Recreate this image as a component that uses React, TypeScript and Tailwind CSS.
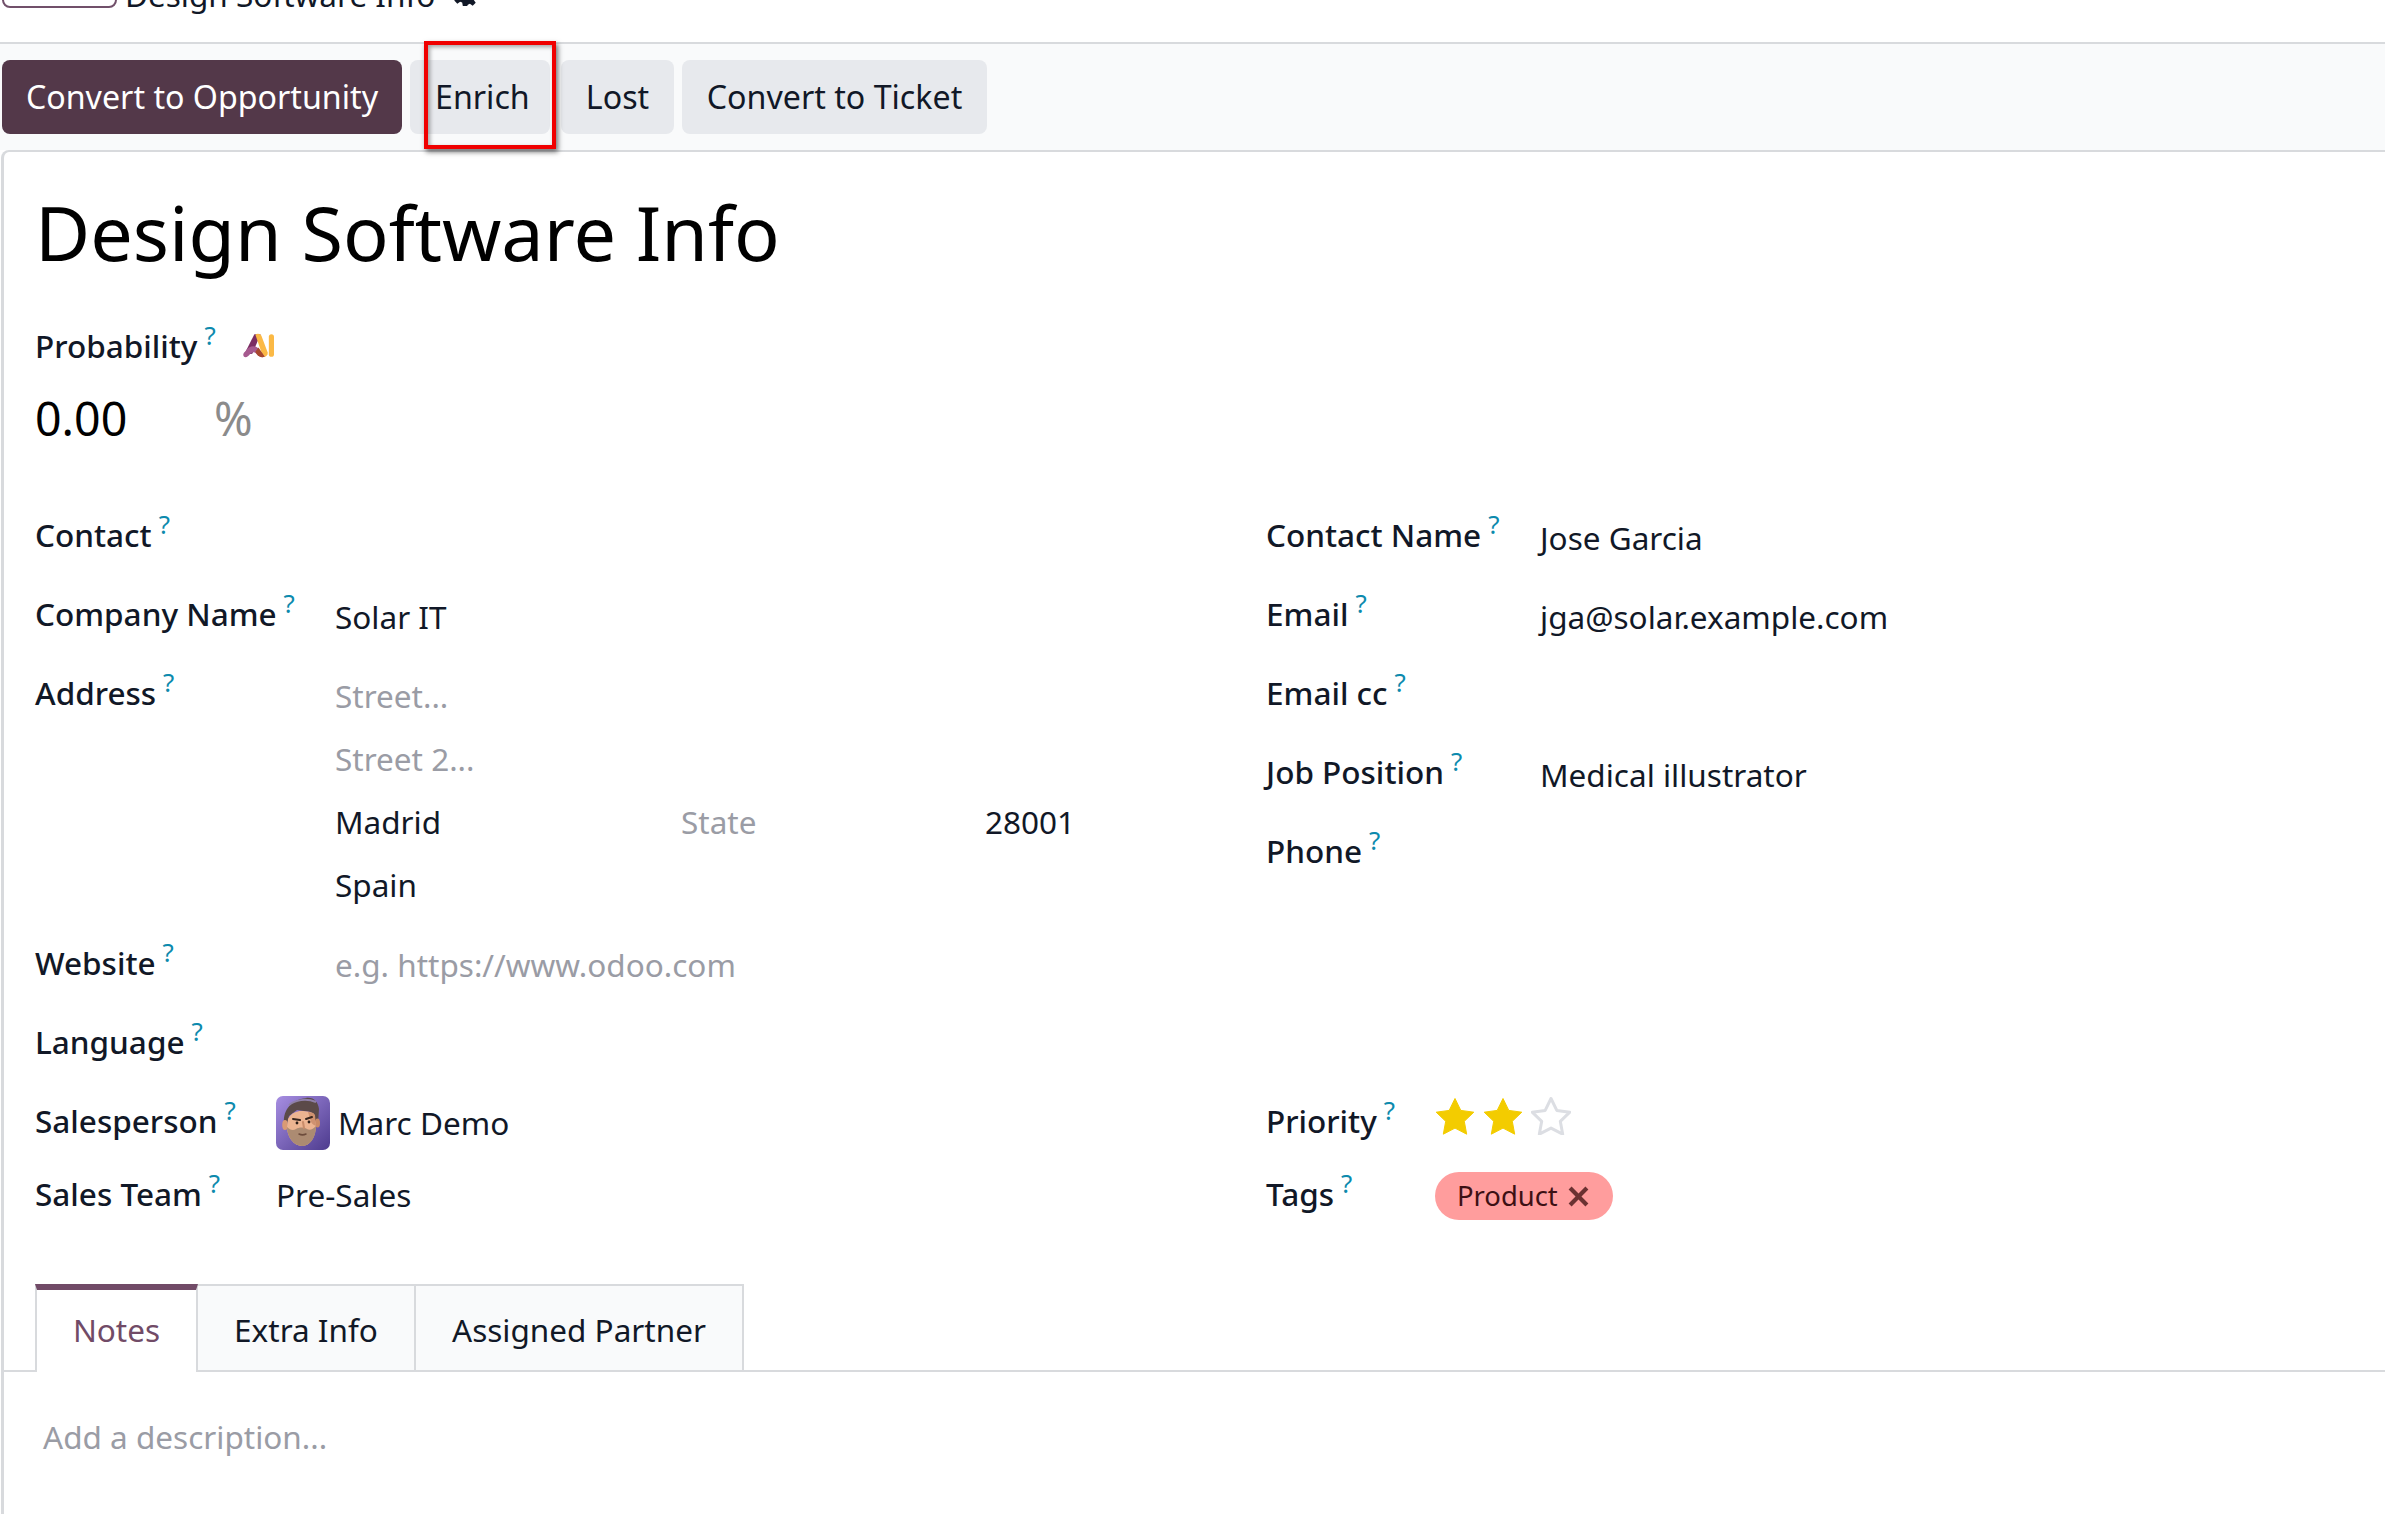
import type { ReactNode } from "react";

const Help = () => (
  <sup className="ml-[7px] text-[26px] font-normal leading-none text-[#0c8aad] -top-[13px]">?</sup>
);

function Label({ children }: { children: ReactNode }) {
  return (
    <span className="text-[31.5px] font-medium leading-none text-[#111827] whitespace-nowrap">
      {children}
      <Help />
    </span>
  );
}

function Row({
  label,
  value,
  labelWidth,
  height = "h-[79px]",
  muted,
}: {
  label: string;
  value?: ReactNode;
  labelWidth: string;
  height?: string;
  muted?: boolean;
}) {
  return (
    <div className={`flex items-start ${height}`}>
      <div className={`${labelWidth} shrink-0 pt-[5px]`}>
        <Label>{label}</Label>
      </div>
      {value && (
        <div className={`text-[31.5px] leading-none ${muted ? "pt-[7px] text-[#9a9ca5]" : "pt-[8px] text-[#111827]"}`}>
          {value}
        </div>
      )}
    </div>
  );
}

function Star({ filled }: { filled: boolean }) {
  return (
    <svg viewBox="0 0 40 38" className="h-[38px] w-[40px]">
      <path
        d="M20 1.500l5.800 11.900 13 1.800-9.500 9.100 2.400 12.900L20 31.100 8.300 37.200l2.400-12.900-9.500-9.100 13-1.800z"
        fill={filled ? "#f3cc00" : "#fff"}
        stroke={filled ? "#f3cc00" : "#dcdee3"}
        strokeWidth={filled ? 1 : 3}
        strokeLinejoin="round"
      />
    </svg>
  );
}

function AiLogo() {
  return (
    <svg viewBox="0 0 30 24" className="ml-[27px] h-[25px] w-[31px]">
      <path d="M11 1h6L9 20 1 21z" fill="#7b2d63" />
      <path d="M12 1.500c2-1.500 5-1 6 1.500l6 16c0 3-3 5-5 3z" fill="#fbb945" />
      <path d="M1 23c-1.500-2-.5-4 1-5 4-6 10-7 14-2l5 7c-3 1-6 0-8-3-2-2-4-2-6 0-2 3-4 4-6 3z" fill="#a65a8f" />
      <path d="M15 14l6 9c-3 1-6 0-8-3l-1-2z" fill="#a8482d" />
      <rect x="25" y="1" width="5" height="22" rx="2.500" fill="#fbb945" />
    </svg>
  );
}

function Avatar() {
  return (
    <svg viewBox="0 0 54 54" className="mt-[2px] h-[54px] w-[54px] shrink-0 rounded-[7px]">
      <defs>
        <linearGradient id="avatarBg" x1="0" y1="0" x2="1" y2="1">
          <stop offset="0" stopColor="#a78ee2" />
          <stop offset="1" stopColor="#4d3b8e" />
        </linearGradient>
      </defs>
      <rect width="54" height="54" fill="url(#avatarBg)" />
      <path d="M8 27C7 13 16 4 30 2c8-1 12 4 13 11l-1 15-4 3-3-15-14-2-8 6-2 9z" fill="#5b4a49" />
      <path d="M13 9c6-5 17-7 27-3" fill="none" stroke="#8f80a8" strokeWidth="2" />
      <ellipse cx="9" cy="29" rx="2.800" ry="5" fill="#d99a74" />
      <ellipse cx="41.500" cy="27" rx="2.500" ry="4.500" fill="#c98a66" />
      <path d="M12 23c3-6 9-8 13-8 6 0 11 1 13 3l2 11c0 12-6 21-14 21-8 0-15-9-15-19z" fill="#ecb491" />
      <path d="M32 16c3 0 6 1 7 3l1 11c-2-1-4-2-5-4z" fill="#cf9270" />
      <path d="M11 31c3 3 6 4 9 2 3-2 8-2 11 0 3 2 6 0 9-3 0 12-6 20-14 20-8 0-15-9-15-19z" fill="#ac8b72" />
      <path d="M17 23l7 1M30 23l6-2" stroke="#38261f" strokeWidth="2" strokeLinecap="round" />
      <circle cx="21" cy="27" r="1.400" fill="#2b1d18" />
      <circle cx="33" cy="26" r="1.400" fill="#2b1d18" />
      <path d="M27 26l1 6" stroke="#c88c6a" strokeWidth="2" strokeLinecap="round" />
      <path d="M23 38c2 1 5 1 7 0" stroke="#6d4c3c" strokeWidth="1.500" fill="none" strokeLinecap="round" />
    </svg>
  );
}

export default function App() {
  return (
    <div className="h-[1514px] w-[2385px] overflow-hidden bg-white font-['Noto_Sans',sans-serif] text-[#111827]">
      {/* breadcrumb, cut off by the top of the picture */}
      <div className="flex h-[42px] items-end">
        <div className="mb-[34px] ml-[2px] h-[20px] w-[115px] rounded-b-[8px] border-2 border-[#71506a]" />
        <div className="mb-[32px] ml-[8px] flex h-[10px] items-end">
          <span className="text-[31.5px] leading-none text-[#111827]">Design Software Info</span>
          <svg viewBox="0 0 24 24" className="mb-[3px] ml-[17px] h-[26px] w-[26px]" fill="#111827">
            <path fillRule="evenodd" d="M10 1h4l.6 3.100 1.900.8 2.600-1.800 2.800 2.800-1.800 2.600.8 1.900 3.100.6v4l-3.100.6-.8 1.900 1.800 2.600-2.800 2.800-2.600-1.800-1.900.8L14 23h-4l-.6-3.100-1.900-.8-2.600 1.800-2.800-2.800 1.800-2.600-.8-1.900L0 14v-4l3.100-.6.8-1.900L2.100 4.900l2.800-2.800 2.600 1.800 1.900-.8zM12 8.500a3.500 3.500 0 100 7 3.500 3.500 0 000-7z" />
          </svg>
        </div>
      </div>

      {/* status bar */}
      <div className="relative flex h-[108px] items-start gap-[8px] border-t-2 border-[#d8dadd] bg-[#f9fafb] pl-[2px] pt-[16px]">
        <button className="h-[74px] w-[400px] rounded-[8px] bg-[#533849] pt-[1px] text-[32.2px] text-white">Convert to Opportunity</button>
        <button className="h-[74px] w-[140px] rounded-[8px] bg-[#e7e9ed] pl-[25px] pt-[1px] text-left text-[32.2px]">Enrich</button>
        <button className="ml-[3px] h-[74px] w-[113px] rounded-[8px] bg-[#e7e9ed] pt-[1px] text-[32.2px]">Lost</button>
        <button className="h-[74px] w-[305px] rounded-[8px] bg-[#e7e9ed] pt-[1px] text-[32.2px]">Convert to Ticket</button>
        <div className="absolute left-[424px] top-[-3px] h-[108px] w-[132px] border-[4px] border-[#f00000] shadow-[2px_3px_5px_rgba(0,0,0,0.55),inset_2px_2px_4px_rgba(0,0,0,0.35)]" />
      </div>

      {/* form sheet */}
      <div className="ml-[1px] h-[1364px] rounded-tl-[8px] border-l-[3px] border-t-2 border-[#d8dadd] bg-white pt-[24px]">
        <h1 className="pl-[31px] text-[75.6px] font-normal leading-[112px] text-black">Design Software Info</h1>

        <div className="mt-[42px] flex items-center pl-[31px]">
          <Label>Probability</Label>
          <AiLogo />
        </div>
        <div className="mt-[33px] flex pl-[31px] text-[46.5px] leading-none text-black">
          <span className="w-[179px]">0.00</span>
          <span className="text-[#8b8b8b]">%</span>
        </div>

        <div className="mt-[73px] flex pl-[31px]">
          <div className="w-[1231px]">
            <Row labelWidth="w-[300px]" label="Contact" />
            <Row labelWidth="w-[300px]" label="Company Name" value="Solar IT" />
            <div className="flex h-[270px] items-start">
              <div className="w-[300px] shrink-0 pt-[5px]">
                <Label>Address</Label>
              </div>
              <div className="flex flex-col gap-[31.5px] pt-[8px] text-[31.5px] leading-none">
                <span className="text-[#9a9ca5]">Street...</span>
                <span className="text-[#9a9ca5]">Street 2...</span>
                <div className="flex">
                  <span className="w-[346px]">Madrid</span>
                  <span className="w-[304px] text-[#9a9ca5]">State</span>
                  <span>28001</span>
                </div>
                <span>Spain</span>
              </div>
            </div>
            <Row labelWidth="w-[300px]" label="Website" value="e.g. https://www.odoo.com" muted />
            <Row labelWidth="w-[300px]" label="Language" height="h-[64px]" />
            <div className="flex h-[73px] items-center">
              <div className="w-[241px] shrink-0">
                <Label>Salesperson</Label>
              </div>
              <Avatar />
              <span className="ml-[8px] mt-[2px] text-[31.5px] leading-none">Marc Demo</span>
            </div>
            <div className="flex h-[74px] items-center">
              <div className="w-[241px] shrink-0">
                <Label>Sales Team</Label>
              </div>
              <span className="text-[31.5px] leading-none">Pre-Sales</span>
            </div>
          </div>
          <div className="flex-1">
            <Row labelWidth="w-[274px]" label="Contact Name" value="Jose Garcia" />
            <Row labelWidth="w-[274px]" label="Email" value="jga@solar.example.com" />
            <Row labelWidth="w-[274px]" label="Email cc" />
            <Row labelWidth="w-[274px]" label="Job Position" value="Medical illustrator" />
            <Row labelWidth="w-[274px]" label="Phone" />
            <div className="h-[176px]" />
            <div className="flex h-[73px] items-center">
              <div className="w-[169px] shrink-0">
                <Label>Priority</Label>
              </div>
              <div className="mb-[12px] flex gap-[8px]">
                <Star filled />
                <Star filled />
                <Star filled={false} />
              </div>
            </div>
            <div className="flex h-[74px] items-center">
              <div className="w-[169px] shrink-0">
                <Label>Tags</Label>
              </div>
              <span className="mt-[2px] flex h-[48px] items-center gap-[10px] rounded-full bg-[#ff9d9d] pl-[22px] pr-[24px] text-[27.4px] text-[#3d1014]">
                Product
                <svg viewBox="0 0 20 20" className="h-[21px] w-[21px]">
                  <path d="M2 2l16 16M18 2L2 18" stroke="#6b3232" strokeWidth="4" />
                </svg>
              </span>
            </div>
          </div>
        </div>

        <div className="mt-[52px] flex h-[88px] border-b-2 border-[#d8dadd] pl-[31px]">
          <div className="h-[88px] w-[163px] border-x-2 border-t-[6px] border-x-[#d8dadd] border-t-[#714b67] bg-white pt-[24px] text-center text-[31.5px] leading-none text-[#714b67]">Notes</div>
          <div className="h-[86px] w-[218px] border-r-2 border-t-2 border-[#d8dadd] bg-[#f9fafb] pt-[28px] text-center text-[31.5px] leading-none">Extra Info</div>
          <div className="h-[86px] w-[328px] border-r-2 border-t-2 border-[#d8dadd] bg-[#f9fafb] pt-[28px] text-center text-[31.5px] leading-none">Assigned Partner</div>
        </div>
        <div className="pl-[39px] pt-[49px] text-[31.5px] leading-none text-[#9a9ca5]">Add a description...</div>
      </div>
    </div>
  );
}
